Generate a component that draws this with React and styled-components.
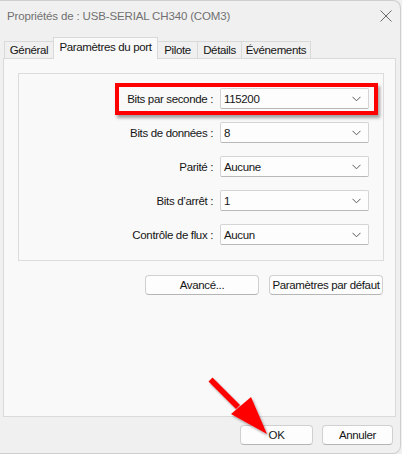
import React from "react";
import styled, { createGlobalStyle } from "styled-components";

const Global = createGlobalStyle`
  html, body { margin: 0; padding: 0; background: #f0f0f0; }
  body { font-family: "Liberation Sans", Arial, sans-serif; }
`;

const Window = styled.div`
  position: relative;
  box-sizing: border-box;
  width: 401px;
  height: 454px;
  background: #f0f0f0;
  border: 1px solid #cfcfcf;
  border-left: none;
  border-radius: 0 8px 8px 0;
  display: flex;
  flex-direction: column;
  overflow: hidden;
  font-size: 11.5px;
  letter-spacing: -0.35px;
  color: #151515;
`;

const TitleBar = styled.div`
  height: 36px;
  display: flex;
  align-items: flex-start;
  justify-content: space-between;
  padding: 6px 8px 0 7px;
  box-sizing: border-box;
`;

const Title = styled.span`
  color: #707070;
  font-size: 11.5px;
  letter-spacing: -0.15px;
  line-height: 18px;
`;

const CloseIcon = styled.svg`
  width: 12px;
  height: 12px;
  margin-top: 3px;
`;

const TabStrip = styled.div`
  display: flex;
  align-items: flex-end;
  padding-left: 4px;
  height: 22px;
  position: relative;
  z-index: 1;
`;

const Tab = styled.div`
  box-sizing: border-box;
  width: ${(p) => p.$w}px;
  height: ${(p) => (p.$active ? "22px" : "18px")};
  padding-bottom: ${(p) => (p.$active ? "3px" : "0")};
  margin-left: -1px;
  border: 1px solid #d9d9d9;
  border-bottom: ${(p) => (p.$active ? "none" : "1px solid #d9d9d9")};
  background: ${(p) => (p.$active ? "#f9f9f9" : "#f0f0f0")};
  display: flex;
  align-items: center;
  justify-content: center;
  white-space: nowrap;
  line-height: 16px;
  &:first-child { margin-left: 0; }
`;

const Panel = styled.div`
  box-sizing: border-box;
  margin: -1px 0 0 3px;
  width: 393px;
  height: 359px;
  background: #f9f9f9;
  border: 1px solid #dadada;
  padding: 14px 11px 0 14px;
  display: flex;
  flex-direction: column;
  align-items: stretch;
`;

const Group = styled.div`
  box-sizing: border-box;
  width: 366px;
  border: 1px solid #dcdcdc;
  padding: 14px 14px 15px 0;
  display: flex;
  flex-direction: column;
  gap: 13px;
`;

const Row = styled.div`
  position: relative;
  display: flex;
  align-items: center;
  justify-content: flex-end;
  gap: 7px;
`;

const Label = styled.span`
  white-space: nowrap;
  position: relative;
  z-index: 2;
`;

const Combo = styled.div`
  box-sizing: border-box;
  width: 149px;
  height: 21px;
  background: #fdfdfd;
  border: 1px solid #d4d4d4;
  border-bottom-color: #b8b8b8;
  border-radius: 2px;
  display: flex;
  align-items: center;
  justify-content: space-between;
  padding: 0 7px 0 3px;
  position: relative;
  z-index: 2;
`;

const Chevron = styled.svg`
  width: 9px;
  height: 6px;
`;

const Highlight = styled.div`
  position: absolute;
  left: 96px;
  right: -9px;
  top: -5px;
  bottom: -6px;
  border: 4px solid #ff0000;
  box-shadow: 2px 3px 3px rgba(0, 0, 0, 0.35);
  z-index: 1;
`;

const ActionRow = styled.div`
  display: flex;
  justify-content: flex-end;
  gap: 10px;
  margin-top: 14px;
  padding-right: 1px;
`;

const Button = styled.button`
  box-sizing: border-box;
  width: ${(p) => p.$w}px;
  height: 20px;
  font: inherit;
  letter-spacing: inherit;
  color: #151515;
  background: #fdfdfd;
  border: 1px solid #d0d0d0;
  border-bottom-color: #b5b5b5;
  border-radius: 4px;
  padding: 0;
  display: flex;
  align-items: center;
  justify-content: center;
  white-space: nowrap;
`;

const Footer = styled.div`
  display: flex;
  justify-content: flex-end;
  gap: 9px;
  padding: 8px 7px 0 0;
`;

const Arrow = styled.svg`
  position: absolute;
  left: 205px;
  top: 372px;
  width: 70px;
  height: 66px;
  overflow: visible;
  z-index: 5;
`;

const rows = [
  { label: "Bits par seconde :", value: "115200", hl: true },
  { label: "Bits de données :", value: "8" },
  { label: "Parité :", value: "Aucune" },
  { label: "Bits d’arrêt :", value: "1" },
  { label: "Contrôle de flux :", value: "Aucun" },
];

const tabs = [
  { t: "Général", w: 50 },
  { t: "Paramètres du port", w: 105, active: true },
  { t: "Pilote", w: 41 },
  { t: "Détails", w: 45 },
  { t: "Événements", w: 70 },
];

export default function App() {
  return (
    <>
      <Global />
      <Window>
        <TitleBar>
          <Title>Propriétés de : USB-SERIAL CH340 (COM3)</Title>
          <CloseIcon viewBox="0 0 12 12">
            <path d="M0.5 0.5 L11.5 11.5 M11.5 0.5 L0.5 11.5" stroke="#6a6a6a" strokeWidth="1" fill="none" />
          </CloseIcon>
        </TitleBar>
        <TabStrip>
          {tabs.map((tab) => (
            <Tab key={tab.t} $w={tab.w} $active={tab.active}>{tab.t}</Tab>
          ))}
        </TabStrip>
        <Panel>
          <Group>
            {rows.map((r) => (
              <Row key={r.label}>
                {r.hl && <Highlight />}
                <Label>{r.label}</Label>
                <Combo>
                  <span>{r.value}</span>
                  <Chevron viewBox="0 0 9 6">
                    <path d="M0.5 0.8 L4.5 4.8 L8.5 0.8" stroke="#5a5a5a" strokeWidth="1" fill="none" />
                  </Chevron>
                </Combo>
              </Row>
            ))}
          </Group>
          <ActionRow>
            <Button $w={114}>Avancé...</Button>
            <Button $w={114}>Paramètres par défaut</Button>
          </ActionRow>
        </Panel>
        <Footer>
          <Button $w={73}>OK</Button>
          <Button $w={71}>Annuler</Button>
        </Footer>
        <Arrow viewBox="205 372 70 66">
          <defs>
            <filter id="sh" x="-20%" y="-20%" width="150%" height="150%">
              <feDropShadow dx="1.5" dy="2" stdDeviation="1.2" floodColor="#000" floodOpacity="0.35" />
            </filter>
          </defs>
          <g filter="url(#sh)" fill="#ff0000">
            <path d="M208.5 380.5 L212.5 376.5 L240 404 L236 408 Z" />
            <path d="M231 413 L251 396 L267 433 Z" />
          </g>
        </Arrow>
      </Window>
    </>
  );
}
